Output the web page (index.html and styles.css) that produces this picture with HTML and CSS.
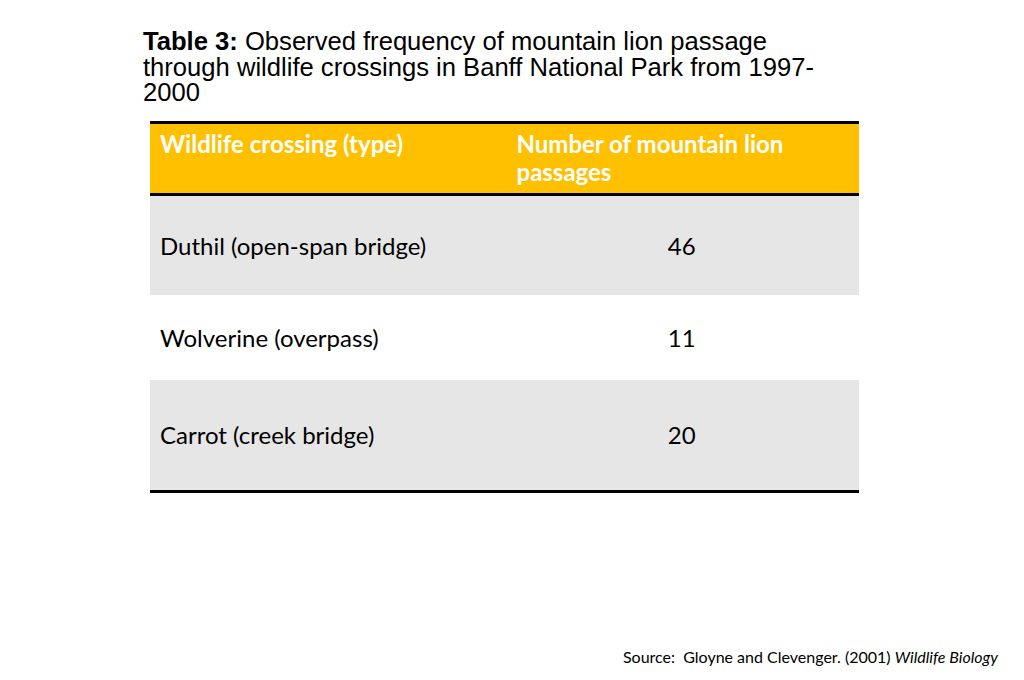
FILE: index.html
```html
<!DOCTYPE html>
<html lang="en">
<head>
<meta charset="utf-8">
<title>Table 3</title>
<link rel="stylesheet" href="styles.css">
</head>
<body>
<div class="slide">
  <h1 class="title"><strong>Table 3:</strong> Observed frequency of mountain lion passage<br>through wildlife crossings in Banff National Park from 1997-<br>2000</h1>
  <table class="data">
    <thead>
      <tr class="head-row">
        <th class="col-name">Wildlife crossing (type)</th>
        <th class="col-num">Number of mountain lion passages</th>
      </tr>
    </thead>
    <tbody>
      <tr class="row row-1 shaded">
        <td class="cell-name">Duthil (open-span bridge)</td>
        <td class="cell-num">46</td>
      </tr>
      <tr class="row row-2">
        <td class="cell-name">Wolverine (overpass)</td>
        <td class="cell-num">11</td>
      </tr>
      <tr class="row row-3 shaded last">
        <td class="cell-name">Carrot (creek bridge)</td>
        <td class="cell-num">20</td>
      </tr>
    </tbody>
  </table>
  <p class="source">Source:&nbsp; Gloyne and Clevenger. (2001) <em>Wildlife Biology</em></p>
</div>
</body>
</html>
```

FILE: styles.css
```css
html, body {
  margin: 0;
  padding: 0;
  background: #ffffff;
}

.slide {
  width: 1024px;
  height: 680px;
  display: flex;
  flex-direction: column;
  box-sizing: border-box;
  padding-top: 29px;
}

.title {
  margin: 0 0 0 143px;
  font-family: "Liberation Sans", Arial, sans-serif;
  font-weight: normal;
  font-size: 25.6px;
  line-height: 25.5px;
  color: #000000;
}

.title strong {
  font-weight: bold;
}

.data {
  margin: 15px 0 0 150px;
  width: 709px;
  border-collapse: separate;
  border-spacing: 0;
  font-family: Lato, "Liberation Sans", sans-serif;
  font-size: 24px;
  color: #000000;
  table-layout: fixed;
}

.head-row th {
  background: #ffc000;
  color: #ffffff;
  font-weight: bold;
  text-align: left;
  vertical-align: top;
  border-top: 3px solid #000000;
  border-bottom: 3px solid #000000;
  height: 75px;
  padding: 6px 10px 0 10px;
  line-height: 28px;
  box-sizing: border-box;
}

.head-row .col-num {
  padding-left: 12px;
  padding-right: 40px;
}

.row td {
  vertical-align: middle;
  padding: 0 10px;
  box-sizing: border-box;
}

.row .cell-num {
  text-align: center;
}

.shaded td {
  background: #e7e6e6;
}

.row-1 td {
  height: 99px;
}

.row-2 td {
  height: 85px;
}

.row-3 td {
  height: 113px;
  border-bottom: 3px solid #000000;
}

.source {
  margin: auto 26px 14px 0;
  align-self: flex-end;
  font-family: Lato, "Liberation Sans", sans-serif;
  font-size: 16px;
  color: #000000;
}
```
